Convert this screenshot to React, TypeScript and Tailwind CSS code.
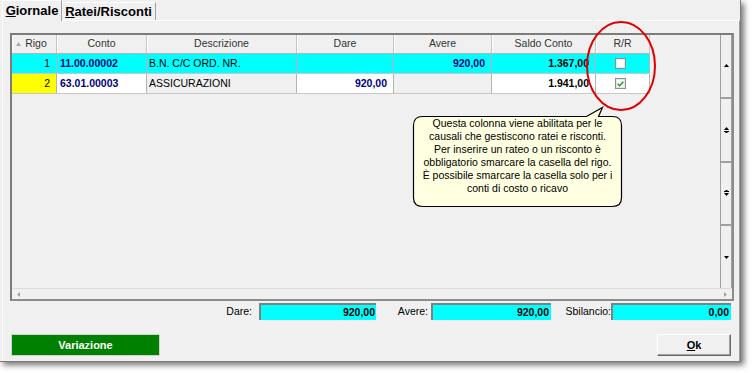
import React from "react";

type Col = { key: string; label: string; w: string };

const cols: Col[] = [
  { key: "rigo", label: "Rigo", w: "w-[45px]" },
  { key: "conto", label: "Conto", w: "w-[90px]" },
  { key: "desc", label: "Descrizione", w: "w-[150px]" },
  { key: "dare", label: "Dare", w: "w-[97px]" },
  { key: "avere", label: "Avere", w: "w-[98px]" },
  { key: "saldo", label: "Saldo Conto", w: "w-[104px]" },
  { key: "rr", label: "R/R", w: "w-[54px]" },
];

function Check({ checked }: { checked: boolean }) {
  return (
    <div className="w-[11px] h-[11px] border border-[#8e8f8f] bg-white flex items-center justify-center shadow-[inset_0_0_0_1px_#e6e6e6]">
      {checked && (
        <svg width="7" height="6" viewBox="0 0 7 6">
          <path d="M0.6 2.8 L2.6 4.8 L6.4 0.8" stroke="#1e9e1e" strokeWidth="1.5" fill="none" />
        </svg>
      )}
    </div>
  );
}

function Tri({ dir }: { dir: "up" | "down" | "left" | "right" }) {
  const d =
    dir === "up"
      ? "M0 3 L2.5 0 L5 3 Z"
      : dir === "down"
      ? "M0 0 L5 0 L2.5 3 Z"
      : dir === "left"
      ? "M3 0 L3 5 L0 2.5 Z"
      : "M0 0 L0 5 L3 2.5 Z";
  const w = dir === "up" || dir === "down" ? 5 : 3;
  const h = dir === "up" || dir === "down" ? 3 : 5;
  return (
    <svg width={w} height={h} viewBox={`0 0 ${w} ${h}`}>
      <path d={d} fill={dir === "left" || dir === "right" ? "#a0a0a0" : "#000"} />
    </svg>
  );
}

function PageIcon({ dir }: { dir: "up" | "down" }) {
  return (
    <svg width="5" height="6" viewBox="0 0 5 6">
      {dir === "up" ? (
        <>
          <path d="M0 3 L2.5 0 L5 3 Z" fill="#000" />
          <rect x="0" y="4" width="5" height="1" fill="#000" />
          <path d="M1 6 L2.5 4.5 L4 6 Z" fill="#000" />
        </>
      ) : (
        <>
          <path d="M1 0 L2.5 1.5 L4 0 Z" fill="#000" />
          <rect x="0" y="1" width="5" height="1" fill="#000" />
          <path d="M0 3 L5 3 L2.5 6 Z" fill="#000" />
        </>
      )}
    </svg>
  );
}

export default function App() {
  const headerCell =
    "h-full flex items-center justify-center border-r border-[#c6c6c6] shadow-[inset_1px_0_0_#ffffff] text-[10.5px] text-[#333]";
  const cell = "h-full flex items-center border-r border-[#b4b4b4] text-[10.5px] shrink-0";

  return (
    <div className="w-[752px] h-[373px] bg-white relative overflow-hidden font-['Liberation_Sans',Arial,sans-serif] text-black">
      <div className="w-[741px] h-[362px] bg-[#f0f0f0] border-r border-b border-[#7a7a7a] shadow-[3px_3px_6px_rgba(0,0,0,0.55)] flex flex-col">
        {/* tabs */}
        <div className="h-[20px] flex items-end pl-[2px] relative z-10">
          <div className="h-[21px] w-[60px] -mb-px bg-[#f0f0f0] border-t border-l border-white border-r border-r-[#a0a0a0] flex items-center justify-center text-[13px] font-bold leading-none pb-[2px]">
            <span>
              <span className="underline">G</span>iornale
            </span>
          </div>
          <div className="h-[18px] w-[94px] border-t border-white border-r border-r-[#a0a0a0] flex items-center justify-center text-[13px] font-bold leading-none">
            <span>
              <span className="underline">R</span>atei/Risconti
            </span>
          </div>
        </div>

        {/* panel */}
        <div className="flex-1 ml-[2px] border-t border-l border-white border-r border-r-[#a0a0a0] flex flex-col">
          {/* grid */}
          <div className="mt-[12px] ml-[7px] w-[724px] h-[268px] border-2 border-[#8c8c8c] border-t-[#7c7c7c] border-l-[#7c7c7c] flex flex-col bg-[#f0f0f0]">
            <div className="h-[253px] flex">
              <div className="flex-1 flex flex-col">
                <div className="w-[638px]">
                  {/* header */}
                  <div className="h-[19px] flex border-b border-[#b4b4b4]">
                    {cols.map((c) => (
                      <div key={c.key} className={`${c.w} ${headerCell} shrink-0 relative`}>
                        {c.key === "rigo" && (
                          <span className="absolute left-[4px] top-[7px]">
                            <svg width="5" height="4" viewBox="0 0 5 4">
                              <path d="M0 4 L2.5 0 L5 4 Z" fill="#a8a8a8" />
                            </svg>
                          </span>
                        )}
                        <span className={c.key === "rigo" ? "pl-[4px]" : ""}>{c.label}</span>
                      </div>
                    ))}
                  </div>
                  {/* row 1 */}
                  <div className="h-[20px] flex border-b border-[#c8c8c8] bg-[#00ffff]">
                    <div className={`w-[45px] ${cell} justify-end pr-[6px]`}>1</div>
                    <div className={`w-[90px] ${cell} pl-[3px] font-bold text-[#000080]`}>11.00.00002</div>
                    <div className={`w-[150px] ${cell} pl-[2px]`}>B.N. C/C ORD. NR.</div>
                    <div className={`w-[97px] ${cell}`}></div>
                    <div className={`w-[98px] ${cell} justify-end pr-[6px] font-bold text-[#000080]`}>920,00</div>
                    <div className={`w-[104px] ${cell} justify-end pr-[6px] font-bold`}>1.367,00</div>
                    <div className={`w-[54px] ${cell} justify-center pr-[4px]`}>
                      <Check checked={false} />
                    </div>
                  </div>
                  {/* row 2 */}
                  <div className="h-[20px] flex border-b border-[#c8c8c8]">
                    <div className={`w-[45px] ${cell} justify-end pr-[6px] bg-[#ffff00]`}>2</div>
                    <div className={`w-[90px] ${cell} pl-[3px] font-bold text-[#000080] bg-white`}>63.01.00003</div>
                    <div className={`w-[150px] ${cell} pl-[2px] bg-[#f0f0f0]`}>ASSICURAZIONI</div>
                    <div className={`w-[97px] ${cell} justify-end pr-[6px] font-bold text-[#000080] bg-white`}>920,00</div>
                    <div className={`w-[98px] ${cell} bg-[#f0f0f0]`}></div>
                    <div className={`w-[104px] ${cell} justify-end pr-[6px] font-bold bg-white`}>1.941,00</div>
                    <div className={`w-[54px] ${cell} justify-center pr-[4px] bg-white`}>
                      <Check checked={true} />
                    </div>
                  </div>
                </div>
              </div>
              {/* vertical scrollbar */}
              <div className="w-[12px] flex flex-col border-l border-r border-[#a0a0a0] bg-[#f0f0f0]">
                <div className="flex-1 flex items-center justify-center border-b-2 border-b-[#a0a0a0]">
                  <Tri dir="up" />
                </div>
                <div className="flex-1 flex items-center justify-center border-b-2 border-b-[#a0a0a0]">
                  <PageIcon dir="up" />
                </div>
                <div className="flex-1 flex items-center justify-center border-b-2 border-b-[#a0a0a0]">
                  <PageIcon dir="down" />
                </div>
                <div className="flex-1 flex items-center justify-center">
                  <Tri dir="down" />
                </div>
              </div>
            </div>
            {/* horizontal scrollbar */}
            <div className="h-[11px] border-t border-[#dcdcdc] flex items-center justify-between px-[5px] bg-[#f0f0f0]">
              <Tri dir="left" />
              <Tri dir="right" />
            </div>
          </div>

          {/* totals */}
          <div className="mt-[2px] h-[17px] flex items-center text-[10.5px]">
            <div className="ml-[197px] w-[52px] text-right">Dare:</div>
            <div className="ml-[7px] w-[117px] h-[17px] bg-[#00ffff] border-t-2 border-l-2 border-[#808080] flex items-center justify-end pr-[1px] font-bold">
              920,00
            </div>
            <div className="w-[52px] text-right">Avere:</div>
            <div className="ml-[3px] w-[120px] h-[17px] bg-[#00ffff] border-t-2 border-l-2 border-[#808080] flex items-center justify-end pr-[2px] font-bold">
              920,00
            </div>
            <div className="w-[60px] text-right">Sbilancio:</div>
            <div className="w-[120px] h-[17px] bg-[#00ffff] border-t-2 border-l-2 border-[#808080] flex items-center justify-end pr-[2px] font-bold">
              0,00
            </div>
          </div>

          {/* buttons */}
          <div className="mt-[14px] h-[22px] flex">
            <div className="ml-[8px] w-[149px] h-[22px] bg-[#008000] border border-[#d0d0d0] flex items-center justify-center text-white font-bold text-[11px]">
              Variazione
            </div>
            <div className="ml-[497px] w-[74px] h-[22px] bg-[#f0f0f0] border border-white border-r-[#696969] border-b-[#696969] shadow-[inset_-1px_-1px_0_#a0a0a0] flex items-center justify-center font-bold text-[11px]">
              <span>
                <span className="underline">O</span>k
              </span>
            </div>
          </div>
        </div>
      </div>

      {/* red highlight ellipse */}
      <svg className="absolute left-[585px] top-[20px]" width="72" height="92" viewBox="0 0 72 92">
        <ellipse cx="36" cy="46" rx="34" ry="44" fill="none" stroke="#e00000" strokeWidth="2" />
      </svg>

      {/* balloon tooltip */}
      <svg className="absolute left-[410px] top-[104px]" width="216" height="106" viewBox="0 0 216 106">
        <path
          d="M12.5 12.5 H176.5 L192.5 3.5 L188.5 12.5 H202.5 Q211.5 12.5 211.5 21.5 V93.5 Q211.5 102.5 202.5 102.5 H12.5 Q3.5 102.5 3.5 93.5 V21.5 Q3.5 12.5 12.5 12.5 Z"
          fill="#ffffe1"
          stroke="#000"
          strokeWidth="1.2"
        />
      </svg>
      <div className="absolute left-[413px] top-[117px] w-[209px] text-center text-[10.5px] leading-[13px] text-black">
        Questa colonna viene abilitata per le
        <br />
        causali che gestiscono ratei e risconti.
        <br />
        Per inserire un rateo o un risconto è
        <br />
        obbligatorio smarcare la casella del rigo.
        <br />
        È possibile smarcare la casella solo per i
        <br />
        conti di costo o ricavo
      </div>
    </div>
  );
}
